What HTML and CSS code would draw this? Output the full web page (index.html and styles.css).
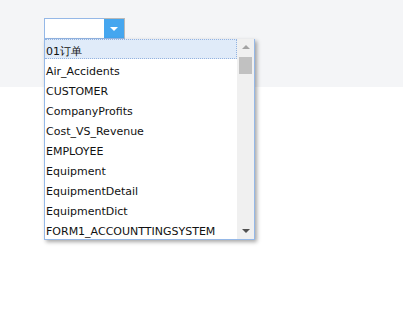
FILE: index.html
```html
<!DOCTYPE html>
<html lang="zh">
<head>
    <meta charset="UTF-8">
    <title>Combobox</title>
    <link rel="stylesheet" href="styles.css">
</head>
<body>

    <div class="top-band">
        <div class="combo">
            <input type="text" class="combo-text">
            <span class="combo-arrow"></span>
        </div>
    </div>

    <!-- panel de la lista desplegable -->
    <div class="combo-panel">
        <div class="combo-items">
            <div class="combo-item selected">01订单</div>
            <div class="combo-item">Air_Accidents</div>
            <div class="combo-item">CUSTOMER</div>
            <div class="combo-item">CompanyProfits</div>
            <div class="combo-item">Cost_VS_Revenue</div>
            <div class="combo-item">EMPLOYEE</div>
            <div class="combo-item">Equipment</div>
            <div class="combo-item">EquipmentDetail</div>
            <div class="combo-item">EquipmentDict</div>
            <div class="combo-item">FORM1_ACCOUNTTINGSYSTEM</div>
        </div>
        <div class="scrollbar">
            <span class="scroll-up"></span>
            <span class="scroll-thumb"></span>
            <span class="scroll-down"></span>
        </div>
    </div>

</body>
</html>
```

FILE: styles.css
```css
html, body {
    margin: 0;
    height: 100%;
}

body {
    position: relative;
    background: #ffffff;
    font-family: "DejaVu Sans", sans-serif;
    font-size: 11px;
    color: #000000;
}

/* --- banda gris superior --- */
.top-band {
    height: 87px;
    background: #f4f5f7;
    padding: 18px 0 0 44px;
    box-sizing: border-box;
}

.combo {
    display: flex;
    width: 81px;
    height: 21px;
}

.combo-text {
    width: 60px;
    height: 21px;
    margin: 0;
    padding: 0 2px;
    border: 1px solid #95b8e7;
    border-right: none;
    background: #ffffff;
    box-sizing: border-box;
    outline: none;
    font: inherit;
}

.combo-arrow {
    position: relative;
    width: 21px;
    height: 21px;
    background: #45a6ef;
    border-top: 1px solid #b9b9b9;
    border-right: 1px solid #b9b9b9;
    border-bottom: 1px solid #95b8e7;
    box-sizing: border-box;
}

.combo-arrow::after {
    content: '';
    position: absolute;
    left: 6px;
    top: 8px;
    border-left: 4px solid transparent;
    border-right: 4px solid transparent;
    border-top: 4px solid #ffffff;
}

/* --- panel desplegable --- */
.combo-panel {
    position: absolute;
    left: 44px;
    top: 39px;
    width: 209px;
    display: flex;
    background: #ffffff;
    border: 1px solid #95b8e7;
    border-top: none;
    box-shadow: 2px 2px 4px rgba(0, 0, 0, 0.35);
}

.combo-items {
    flex: 1;
}

.combo-item {
    height: 20px;
    line-height: 20px;
    padding: 3px 0 0 1px;
    box-sizing: border-box;
    white-space: nowrap;
    overflow: hidden;
    color: #111111;
}

.combo-item.selected {
    background: #e0ebf9;
    border: 1px dotted #94b3e0;
    border-left: none;
    padding-top: 2px;
}

.scrollbar {
    position: relative;
    width: 17px;
    background: #f0f0f0;
}

.scroll-up {
    position: absolute;
    left: 5px;
    top: 6px;
    border-left: 4px solid transparent;
    border-right: 4px solid transparent;
    border-bottom: 4px solid #a3a3a3;
}

.scroll-thumb {
    position: absolute;
    left: 2px;
    top: 18px;
    width: 13px;
    height: 17px;
    background: #c1c1c1;
}

.scroll-down {
    position: absolute;
    left: 5px;
    bottom: 6px;
    border-left: 4px solid transparent;
    border-right: 4px solid transparent;
    border-top: 4px solid #505050;
}
```
